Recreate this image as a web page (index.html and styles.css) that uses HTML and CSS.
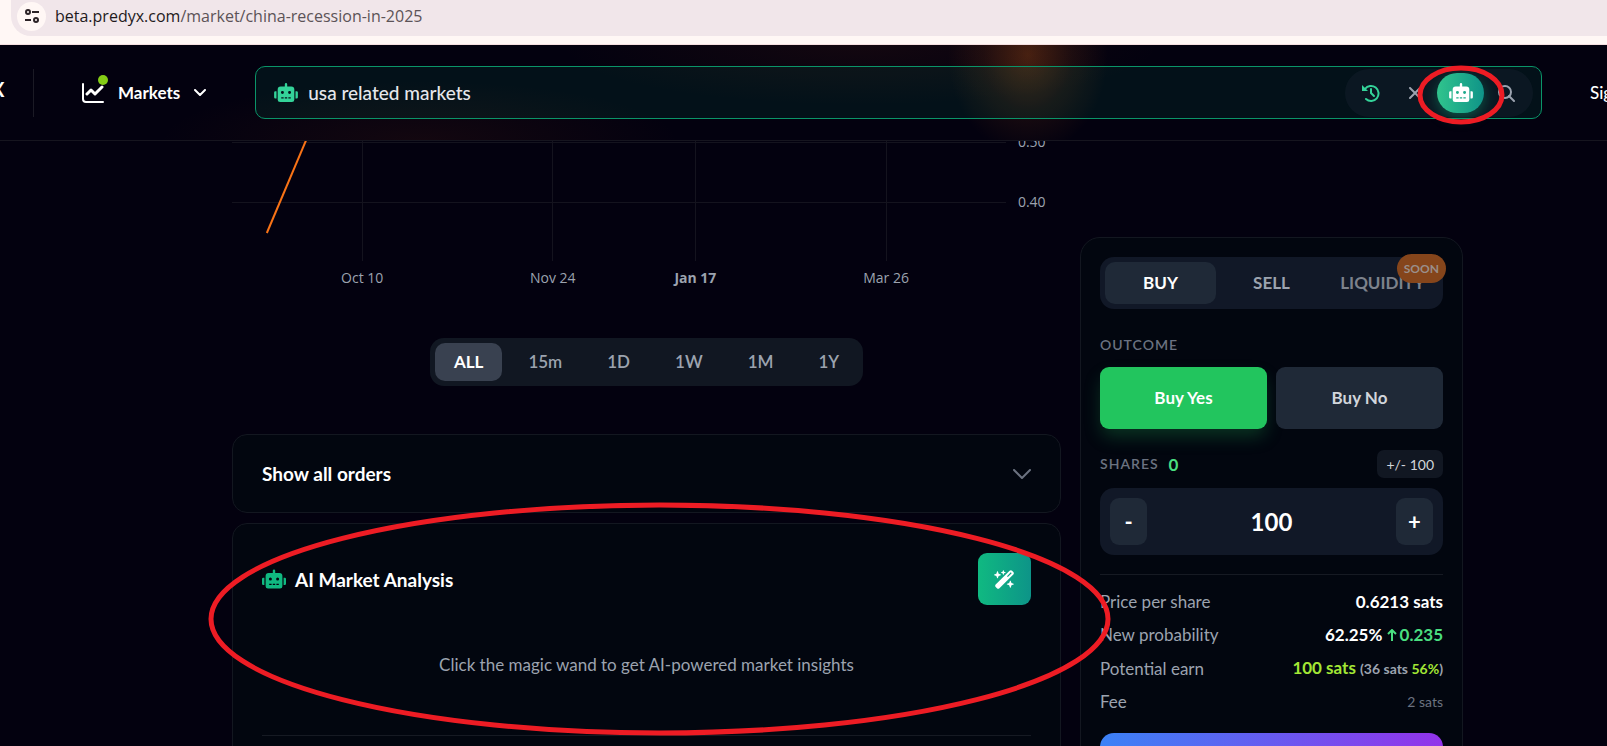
FILE: index.html
```
<!DOCTYPE html>
<html lang="en">
<head>
  <meta charset="UTF-8">
  <meta name="viewport" content="width=device-width, initial-scale=1.0">
  <title>China recession in 2025</title>
  <link rel="stylesheet" href="styles.css">
</head>
<body>
  <!-- Shared icons -->
  <svg class="sprite" aria-hidden="true">
    <symbol id="robot" viewBox="0 0 640 512">
      <path d="M32,224H64V416H32A32,32,0,0,1,0,384V256A32,32,0,0,1,32,224Zm512-48V448a64,64,0,0,1-64,64H160a64,64,0,0,1-64-64V176a80,80,0,0,1,80-80H288V32a32,32,0,0,1,64,0V96H464A80,80,0,0,1,544,176ZM264,256a40,40,0,1,0-40,40A40,40,0,0,0,264,256Zm-8,128H192v32h64Zm96,0H288v32h64ZM456,256a40,40,0,1,0-40,40A40,40,0,0,0,456,256Zm-8,128H384v32h64ZM640,256V384a32,32,0,0,1-32,32H576V224h32A32,32,0,0,1,640,256Z"/>
    </symbol>
    <symbol id="chevron" viewBox="0 0 18 10">
      <path d="M1 1l8 8 8-8" fill="none" stroke="currentColor" stroke-width="2" stroke-linecap="round" stroke-linejoin="round"/>
    </symbol>
  </svg>

  <!-- Address bar -->
  <div class="browser-bar">
    <div class="address">
      <button class="site-info" aria-label="Site information">
        <svg width="16" height="16" viewBox="0 0 16 16" fill="none" stroke="#2b2226" stroke-width="2">
          <circle cx="4" cy="4" r="2"/><path d="M8 4h7M1 12h6"/><circle cx="12" cy="12" r="2"/>
        </svg>
      </button>
      <span class="url">beta.predyx.com<span class="url-path">/market/china-recession-in-2025</span></span>
    </div>
  </div>

  <!-- Header -->
  <header class="header">
    <a href="#" class="brand">X</a>
    <nav class="nav">
      <button class="nav-markets">
        <span class="chart-icon">
          <svg width="22" height="20" viewBox="0 0 22 20" fill="none" stroke="#fff" stroke-width="2" stroke-linecap="round" stroke-linejoin="round">
            <path d="M1 1v15q0 3 3 3h17"/>
            <path d="M5 11l4-4 4 4 7-7" stroke-width="3"/>
          </svg>
          <span class="dot"></span>
        </span>
        Markets
        <svg width="12" height="7" viewBox="0 0 12 7" fill="none" stroke="#fff" stroke-width="2" stroke-linecap="round" stroke-linejoin="round"><path d="M1 1l5 5 5-5"/></svg>
      </button>
    </nav>
    <form class="search">
      <svg class="search-robot" width="24" height="19"><use href="#robot"/></svg>
      <input type="text" class="search-input" aria-label="Search markets" value="usa related markets">
      <div class="search-tools">
        <button type="button" class="tool history" aria-label="History">
          <svg width="18" height="18" viewBox="0 0 18 18" fill="none" stroke="currentColor" stroke-width="2" stroke-linecap="round">
            <path d="M3 5a7.5 7.5 0 1 1 1 10"/>
            <path d="M0 1v6h6z" fill="currentColor" stroke="none"/>
            <path d="M9 5v4l3 3"/>
          </svg>
        </button>
        <button type="button" class="tool clear" aria-label="Clear">
          <svg width="12" height="12" viewBox="0 0 12 12" stroke="currentColor" stroke-width="2" stroke-linecap="round"><path d="M1 1l10 10M11 1L1 11"/></svg>
        </button>
        <button type="button" class="tool ai" aria-label="AI search">
          <svg class="ai-robot" width="24" height="19"><use href="#robot"/></svg>
          <svg class="mark-small" viewBox="0 0 88 60"><ellipse cx="44" cy="30" rx="41" ry="27"/></svg>
        </button>
        <button type="submit" class="tool find" aria-label="Search">
          <svg width="18" height="18" viewBox="0 0 18 18" fill="none" stroke="currentColor" stroke-width="2" stroke-linecap="round"><circle cx="8" cy="8" r="6"/><path d="M12 12l5 5"/></svg>
        </button>
      </div>
    </form>
    <a href="#" class="sign-in">Sign</a>
  </header>

  <main class="page">
    <section class="market">
      <!-- Price chart -->
      <svg class="chart" role="img" aria-label="Price history">
        <g class="grid">
          <line x1="0" y1="1" x2="93.4%" y2="1"/>
          <line x1="0" y1="61" x2="93.4%" y2="61"/>
          <line x1="15.7%" y1="0" x2="15.7%" y2="120"/>
          <line x1="38.7%" y1="0" x2="38.7%" y2="120"/>
          <line x1="55.9%" y1="0" x2="55.9%" y2="120"/>
          <line x1="78.9%" y1="0" x2="78.9%" y2="120"/>
        </g>
        <line class="price" x1="4.2%" y1="92" x2="9%" y2="-2"/>
        <text x="94.8%" y="6">0.50</text>
        <text x="94.8%" y="66">0.40</text>
        <g class="dates">
          <text x="15.7%" y="142">Oct 10</text>
          <text x="38.7%" y="142">Nov 24</text>
          <text x="55.9%" y="142" class="year">Jan 17</text>
          <text x="78.9%" y="142">Mar 26</text>
        </g>
      </svg>

      <div class="ranges">
        <button class="range active">ALL</button>
        <button class="range">15m</button>
        <button class="range">1D</button>
        <button class="range">1W</button>
        <button class="range">1M</button>
        <button class="range">1Y</button>
      </div>

      <button class="card orders">
        Show all orders
        <svg width="18" height="10"><use href="#chevron"/></svg>
      </button>

      <div class="card analysis">
        <div class="analysis-head">
          <svg class="analysis-robot" width="24" height="20"><use href="#robot"/></svg>
          <h2>AI Market Analysis</h2>
          <button class="wand" aria-label="Analyze market">
            <svg width="21" height="19" viewBox="0 0 576 512" fill="#fff">
              <path d="M234.7 42.7L197 56.8c-3 1.1-5 4-5 7.2s2 6.1 5 7.2l37.7 14.1L248.8 123c1.1 3 4 5 7.2 5s6.1-2 7.2-5l14.1-37.7L315 71.2c3-1.1 5-4 5-7.2s-2-6.1-5-7.2L277.3 42.7 263.2 5c-1.1-3-4-5-7.2-5s-6.1 2-7.2 5L234.7 42.7zM46.1 395.4c-18.7 18.7-18.7 49.1 0 67.9l34.6 34.6c18.7 18.7 49.1 18.7 67.9 0L529.9 116.5c18.7-18.7 18.7-49.1 0-67.9L495.3 14.1c-18.7-18.7-49.1-18.7-67.9 0L46.1 395.4zM484.6 82.6l-105 105-23.3-23.3 105-105 23.3 23.3zM7.5 117.2C3 118.9 0 123.2 0 128s3 9.1 7.5 10.8L64 160l21.2 56.5c1.7 4.5 6 7.5 10.8 7.5s9.1-3 10.8-7.5L128 160l56.5-21.2c4.5-1.7 7.5-6 7.5-10.8s-3-9.1-7.5-10.8L128 96 106.8 39.5C105.1 35 100.8 32 96 32s-9.1 3-10.8 7.5L64 96 7.5 117.2zm352 256c-4.5 1.7-7.5 6-7.5 10.8s3 9.1 7.5 10.8L416 416l21.2 56.5c1.7 4.5 6 7.5 10.8 7.5s9.1-3 10.8-7.5L480 416l56.5-21.2c4.5-1.7 7.5-6 7.5-10.8s-3-9.1-7.5-10.8L480 352l-21.2-56.5c-1.7-4.5-6-7.5-10.8-7.5s-9.1 3-10.8 7.5L416 352l-56.5 21.2z"/>
            </svg>
          </button>
        </div>
        <p class="hint">Click the magic wand to get AI-powered market insights</p>
        <hr>
        <svg class="mark-large" viewBox="0 0 904 234" preserveAspectRatio="none"><ellipse cx="452" cy="117" rx="449" ry="114"/></svg>
      </div>
    </section>

    <!-- Trade panel -->
    <aside class="trade">
      <div class="tabs">
        <button class="tab active">BUY</button>
        <button class="tab">SELL</button>
        <button class="tab soon" disabled>LIQUIDITY<span class="badge">SOON</span></button>
      </div>

      <h3 class="label">OUTCOME</h3>
      <div class="outcomes">
        <button class="outcome yes">Buy Yes</button>
        <button class="outcome">Buy No</button>
      </div>

      <div class="shares-head">
        <label class="label" for="shares">SHARES</label>
        <span class="owned">0</span>
        <button class="step-size">+/- 100</button>
      </div>
      <div class="stepper">
        <button class="step">-</button>
        <input type="text" id="shares" class="amount" value="100">
        <button class="step">+</button>
      </div>

      <dl class="summary">
        <div class="row"><dt>Price per share</dt><dd class="strong">0.6213 sats</dd></div>
        <div class="row">
          <dt>New probability</dt>
          <dd class="strong">62.25%
            <span class="up"><svg width="10" height="12" viewBox="0 0 10 12" fill="none" stroke="currentColor" stroke-width="2"><path d="M5 12V1M1 5l4-4 4 4"/></svg>0.235</span>
          </dd>
        </div>
        <div class="row">
          <dt>Potential earn</dt>
          <dd class="earn">100 sats <small>(36 sats <span>56%</span>)</small></dd>
        </div>
        <div class="row"><dt>Fee</dt><dd class="fee">2 sats</dd></div>
      </dl>
      <button class="submit" aria-label="Place order"></button>
    </aside>
  </main>
</body>
</html>
```

FILE: styles.css
```
* {
  margin: 0;
  padding: 0;
  box-sizing: border-box;
}

body {
  font-family: Lato, "Liberation Sans", sans-serif;
  font-size: 17px;
  color: #fff;
  background-color: #03010f;
  height: 100vh;
  overflow: hidden;
}

button,
input {
  font: inherit;
  color: inherit;
  border: none;
  background: none;
}

button {
  cursor: pointer;
}

svg {
  display: block;
  flex-shrink: 0;
}

.sprite {
  position: absolute;
  width: 0;
  height: 0;
}

/* Address bar */
.browser-bar {
  height: 45px;
  background-color: #fff7f5;
  border-bottom: 1px solid #f5dfe0;
  padding-left: 11px;
}

.address {
  height: 36px;
  background-color: #f1e6ea;
  border-radius: 0 0 0 20px;
  display: flex;
  align-items: center;
  gap: 9px;
  padding: 0 6px 4px;
}

.site-info {
  width: 29px;
  height: 29px;
  border-radius: 50%;
  background-color: #fff7f5;
  display: flex;
  align-items: center;
  justify-content: center;
}

.url {
  font-family: "Open Sans", "Noto Sans", sans-serif;
  font-size: 16px;
  color: #1f1a1c;
}

.url-path {
  color: #5c5357;
}

/* Header */
.header {
  height: 96px;
  display: flex;
  align-items: center;
  overflow: hidden;
  border-bottom: 1px solid #16151f;
  background-image: radial-gradient(ellipse 80px 100px at 1028px 10px, rgba(249, 115, 22, 0.26), rgba(249, 115, 22, 0.09) 55%, transparent),
                    radial-gradient(ellipse 300px 60px at 860px 0, rgba(160, 60, 20, 0.1), transparent),
                    radial-gradient(ellipse 260px 60px at 420px 96px, rgba(160, 60, 20, 0.1), transparent);
}

.brand {
  width: 34px;
  height: 48px;
  border-right: 1px solid #1b1a25;
  color: #fff;
  font-size: 20px;
  font-weight: 700;
  line-height: 40px;
  text-decoration: none;
  text-indent: -9px;
}

.nav {
  padding: 0 49px 0 48px;
}

.nav-markets {
  display: flex;
  align-items: center;
  gap: 14px;
  font-size: 17px;
  font-weight: 700;
}

.chart-icon {
  position: relative;
}

.dot {
  position: absolute;
  top: -8px;
  right: -4px;
  width: 10px;
  height: 10px;
  border-radius: 50%;
  background-color: #84cc16;
}

.search {
  flex: 1;
  height: 53px;
  display: flex;
  align-items: center;
  gap: 10px;
  padding: 0 8px 0 18px;
  border: 1px solid #0a9468;
  border-radius: 10px;
  background-color: rgba(16, 185, 129, 0.09);
}

.search-robot {
  fill: #34d399;
}

.search-input {
  flex: 1;
  min-width: 0;
  font-size: 19px;
  font-weight: 500;
  color: #e5e7eb;
  outline: none;
}

.search-tools {
  display: flex;
  align-items: center;
  height: 48px;
  padding: 0 5px 0 4px;
  border-radius: 24px;
  background-color: rgba(31, 41, 55, 0.3);
}

.tool {
  height: 40px;
  width: 44px;
  display: flex;
  align-items: center;
  justify-content: center;
  color: #9ca3af;
}

.history {
  color: #34d399;
}

.ai {
  position: relative;
  width: 47px;
  border-radius: 20px;
  background-image: linear-gradient(to right, #30c48d, #0f9488);
  box-shadow: 0 4px 14px rgba(16, 185, 129, 0.4);
}

.ai-robot {
  fill: #fff;
}

.mark-small,
.mark-large {
  position: absolute;
  z-index: 2;
  fill: none;
  stroke: #ed1c24;
  stroke-width: 5px;
  pointer-events: none;
}

.mark-small {
  width: 88px;
  height: 60px;
  top: -8px;
  left: -20px;
}

.sign-in {
  width: 65px;
  padding-left: 48px;
  font-size: 17px;
  font-weight: 500;
  color: #fff;
  text-decoration: none;
  white-space: nowrap;
}

/* Page */
.page {
  display: grid;
  grid-template-columns: 1fr 383px;
  gap: 19px;
  align-items: start;
  padding: 0 144px 0 232px;
}

.chart {
  width: 100%;
  height: 149px;
}

.chart text {
  font-family: "Open Sans", "Noto Sans", sans-serif;
  font-size: 14px;
  fill: #9ca3af;
}

.chart .dates {
  text-anchor: middle;
}

.chart .year {
  font-weight: 700;
}

.grid line {
  stroke: #14131e;
  shape-rendering: crispEdges;
}

.price {
  stroke: #f97316;
  stroke-width: 2px;
}

.ranges {
  width: fit-content;
  margin: 48px auto;
  display: flex;
  gap: 7px;
  padding: 5px;
  border-radius: 14px;
  background-color: #111722;
}

.range {
  height: 38px;
  padding: 0 19px 2px;
  border-radius: 10px;
  color: #9ca3af;
  font-weight: 600;
}

.range.active {
  background-color: #394150;
  color: #fff;
  font-weight: 700;
}

.card {
  border: 1px solid #131720;
  border-radius: 15px;
  background-color: #02060f;
  padding: 29px;
}

.orders {
  width: 100%;
  height: 79px;
  display: flex;
  align-items: center;
  justify-content: space-between;
  margin-bottom: 10px;
  font-size: 19px;
  font-weight: 700;
}

.orders svg {
  color: #6b7280;
}

.analysis {
  position: relative;
  height: 320px;
}

.analysis-head {
  display: flex;
  align-items: center;
  gap: 9px;
}

.analysis-head h2 {
  flex: 1;
  font-size: 19px;
}

.analysis-robot {
  fill: #10b981;
}

.wand {
  width: 53px;
  height: 52px;
  display: flex;
  align-items: center;
  justify-content: center;
  border-radius: 9px;
  background-image: linear-gradient(to right, #10b981, #0d9488);
}

.hint {
  margin: 48px 0 58px;
  font-size: 17px;
  line-height: 24px;
  text-align: center;
  color: #9ca3af;
}

.analysis hr {
  border: none;
  border-top: 1px solid #161a23;
}

.mark-large {
  top: -22px;
  left: -25px;
  width: calc(100% + 76px);
  height: 234px;
}

/* Trade panel */
.trade {
  margin-top: 96px;
  height: 620px;
  padding: 19px;
  border: 1px solid #131720;
  border-radius: 20px;
  background-color: #02060f;
}

.tabs {
  display: grid;
  grid-template-columns: 1fr 1fr 1fr;
  padding: 5px;
  border-radius: 14px;
  background-color: #111827;
}

.tab {
  height: 42px;
  padding-bottom: 2px;
  border-radius: 10px;
  font-size: 17px;
  font-weight: 700;
  color: #9ca3af;
}

.tab.active {
  background-color: #1f2937;
  color: #fff;
}

.tab.soon {
  position: relative;
  color: #7d828c;
}

.badge {
  position: absolute;
  top: -8px;
  right: -8px;
  height: 29px;
  padding: 0 7px;
  border-radius: 15px;
  background-color: #85451b;
  color: #9a8f8a;
  font-size: 12px;
  line-height: 29px;
}

.label {
  font-size: 14px;
  font-weight: 600;
  letter-spacing: 1px;
  line-height: 18px;
  color: #6b7280;
}

h3.label {
  margin: 27px 0 13px;
}

.outcomes {
  display: grid;
  grid-template-columns: 1fr 1fr;
  gap: 9px;
}

.outcome {
  height: 62px;
  padding-bottom: 2px;
  border-radius: 9px;
  background-color: #1f2937;
  color: #d1d5db;
  font-size: 17px;
  font-weight: 700;
}

.outcome.yes {
  background-color: #22c55e;
  color: #fff;
  box-shadow: 0 9px 18px -2px rgba(34, 197, 94, 0.25);
}

.shares-head {
  display: flex;
  align-items: center;
  gap: 10px;
  margin: 21px 0 10px;
}

.owned {
  flex: 1;
  font-size: 17px;
  font-weight: 700;
  color: #4ade80;
}

.step-size {
  height: 28px;
  padding: 0 9px;
  border-radius: 7px;
  background-color: #111722;
  color: #d1d5db;
  font-size: 14px;
}

.stepper {
  display: flex;
  padding: 10px;
  border-radius: 14px;
  background-color: #111827;
}

.step {
  width: 37px;
  height: 47px;
  border-radius: 9px;
  background-color: #1f2937;
  font-size: 22px;
  font-weight: 700;
}

.amount {
  flex: 1;
  min-width: 0;
  text-align: center;
  font-size: 24px;
  font-weight: 700;
  outline: none;
}

.summary {
  margin-top: 19px;
  padding-top: 15px;
  border-top: 1px solid #161a23;
  display: grid;
  gap: 9px;
  font-size: 17px;
  line-height: 24px;
}

.row {
  display: flex;
  justify-content: space-between;
  align-items: center;
}

.row dt {
  color: #9ca3af;
}

.strong,
.earn {
  font-weight: 700;
}

.up {
  display: inline-flex;
  align-items: center;
  gap: 3px;
  color: #4ade80;
}

.earn {
  color: #a3e635;
}

.earn small {
  font-size: 14px;
  color: #9ca3af;
}

.earn small span {
  color: #a3e635;
}

.fee {
  font-size: 14px;
  color: #6b7280;
}

.submit {
  width: 100%;
  height: 60px;
  margin-top: 19px;
  border-radius: 14px;
  background-image: linear-gradient(to right, #3b82f6, #9333ea);
}
```
